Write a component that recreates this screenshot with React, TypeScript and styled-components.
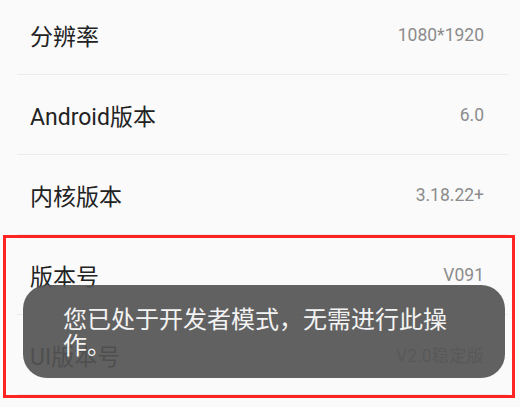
import React from "react";
import styled, { createGlobalStyle } from "styled-components";

const Global = createGlobalStyle`
  html, body { margin: 0; padding: 0; background: #fafafa; }
  body { width: 520px; height: 407px; overflow: hidden; font-family: Roboto, "Noto Sans CJK SC", sans-serif; }
`;

const Screen = styled.div`
  position: relative;
  width: 520px;
  height: 407px;
  overflow: hidden;
  background: #fafafa;
`;

const List = styled.div`
  display: flex;
  flex-direction: column;
  margin-top: -5px;
`;

const Row = styled.div`
  display: flex;
  align-items: center;
  justify-content: space-between;
  height: 80px;
  box-sizing: border-box;
  margin: 0 12px 0 17px;
  padding: 0 24px 0 13px;
  border-bottom: 1px solid #ebebeb;
`;

const Label = styled.span`
  font-family: Roboto, "Noto Sans CJK SC", sans-serif;
  font-size: 23px;
  color: #222;
`;

const Value = styled.span`
  font-family: Roboto, "Noto Sans CJK SC", sans-serif;
  font-size: 17.5px;
  color: #8c8c8c;
`;

const Highlight = styled.div`
  position: absolute;
  left: 3px;
  top: 235px;
  width: 512px;
  height: 163px;
  box-sizing: border-box;
  border: 3px solid #ff2424;
  pointer-events: none;
`;

const Toast = styled.div`
  position: absolute;
  left: 23px;
  top: 285px;
  width: 482px;
  height: 93px;
  box-sizing: border-box;
  padding: 20px 40px;
  border-radius: 24px;
  background: rgba(84, 84, 84, 0.92);
  color: #f3f3f3;
  font-family: "Noto Sans CJK SC", sans-serif;
  font-size: 24px;
  line-height: 26px;
`;

const rows: [string, string][] = [
  ["分辨率", "1080*1920"],
  ["Android版本", "6.0"],
  ["内核版本", "3.18.22+"],
  ["版本号", "V091"],
  ["UI版本号", "V2.0稳定版"],
];

export default function App() {
  return (
    <>
      <Global />
      <Screen>
        <List>
          {rows.map(([l, v]) => (
            <Row key={l}>
              <Label>{l}</Label>
              <Value>{v}</Value>
            </Row>
          ))}
        </List>
        <Highlight />
        <Toast>您已处于开发者模式，无需进行此操作。</Toast>
      </Screen>
    </>
  );
}
